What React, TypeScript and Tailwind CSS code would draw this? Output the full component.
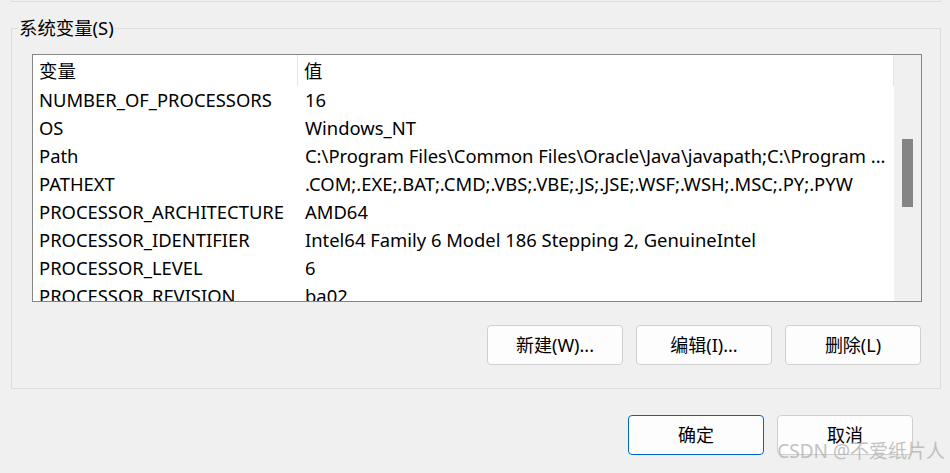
const rows: [string, string][] = [
  ["NUMBER_OF_PROCESSORS", "16"],
  ["OS", "Windows_NT"],
  ["Path", "C:\\Program Files\\Common Files\\Oracle\\Java\\javapath;C:\\Program ..."],
  ["PATHEXT", ".COM;.EXE;.BAT;.CMD;.VBS;.VBE;.JS;.JSE;.WSF;.WSH;.MSC;.PY;.PYW"],
  ["PROCESSOR_ARCHITECTURE", "AMD64"],
  ["PROCESSOR_IDENTIFIER", "Intel64 Family 6 Model 186 Stepping 2, GenuineIntel"],
  ["PROCESSOR_LEVEL", "6"],
  ["PROCESSOR_REVISION", "ba02"],
];

function WinButton({ label, primary }: { label: string; primary?: boolean }) {
  return (
    <button
      className={
        primary
          ? "w-[136px] h-[40px] rounded-[4px] border border-[#0067c0] bg-[#fdfdfd] text-[18px] text-black"
          : "w-[136px] h-[40px] rounded-[4px] border border-[#cfcfcf] bg-[#fdfdfd] text-[18px] text-black"
      }
    >
      {label}
    </button>
  );
}

function App() {
  return (
    <div
      className="relative w-[950px] h-[473px] overflow-hidden bg-[#f0f0f0] text-black"
      style={{ fontFamily: '"Noto Sans", "Noto Sans CJK SC", sans-serif' }}
    >
      <div className="ml-[11px] w-[930px] h-[2px] border-x border-b border-[#dcdcdc]" />

      <fieldset className="ml-[11px] mt-[14px] w-[930px] h-[373px] border border-[#dcdcdc]">
        <legend className="ml-[6px] px-[1px] text-[18.4px] leading-[24px]">系统变量(S)</legend>

        <div className="ml-[20px] mt-[14px] w-[890px] h-[248px] border border-[#868686] bg-white flex overflow-hidden">
          <div className="w-[861px] flex flex-col text-[18.4px]">
            <div className="flex h-[31px] shrink-0 items-center">
              <div className="w-[265px] h-full pl-[6px] flex items-center border-r border-[#e5e5e5]">变量</div>
              <div className="flex-1 h-full pl-[6px] flex items-center border-r border-[#e5e5e5]">值</div>
            </div>
            {rows.map(([name, value]) => (
              <div key={name} className="flex h-[28px] shrink-0 items-center whitespace-nowrap">
                <div className="w-[266px] pl-[6px]">{name}</div>
                <div className="flex-1 pl-[6px] overflow-hidden">{value}</div>
              </div>
            ))}
          </div>
          <div className="w-[27px] bg-[#f0f0f0] pt-[84px] pl-[8px]">
            <div className="w-[11px] h-[68px] bg-[#858585]" />
          </div>
        </div>

        <div className="ml-[20px] mt-[23px] w-[889px] flex justify-end gap-[13px]">
          <WinButton label="新建(W)..." />
          <WinButton label="编辑(I)..." />
          <WinButton label="删除(L)" />
        </div>
      </fieldset>

      <div className="mt-[26px] pr-[37px] flex justify-end gap-[13px]">
        <WinButton label="确定" primary />
        <WinButton label="取消" />
      </div>

      <div className="absolute right-[5px] bottom-[8px] text-[19px] text-[#b4b4b4] opacity-80 whitespace-nowrap">
        CSDN @不爱纸片人
      </div>
    </div>
  );
}

export default App;
